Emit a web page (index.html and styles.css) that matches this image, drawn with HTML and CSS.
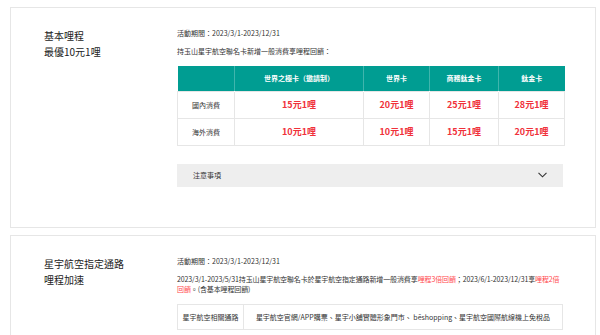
FILE: index.html
```html
<!DOCTYPE html>
<html lang="zh-Hant">
<head>
  <meta charset="UTF-8" />
  <meta name="viewport" content="width=device-width, initial-scale=1.0"/>
  <title>星宇聯名卡 - 哩程回饋</title>
  <link rel="stylesheet" href="styles.css">
</head>
<body>
  <div class="page">
    <section class="card card-basic">
      <h2 class="card-title">基本哩程<br>最優10元1哩</h2>
      <div class="card-body">
        <p class="period">活動期間：2023/3/1-2023/12/31</p>
        <p class="desc">持玉山星宇航空聯名卡新增一般消費享哩程回饋：</p>

        <table class="mile-table">
          <colgroup>
            <col class="c-label">
            <col class="c-infinite">
            <col class="c-world">
            <col class="c-business">
            <col class="c-titanium">
          </colgroup>
          <thead>
            <tr>
              <th></th>
              <th>世界之極卡（邀請制）</th>
              <th>世界卡</th>
              <th>商務鈦金卡</th>
              <th>鈦金卡</th>
            </tr>
          </thead>
          <tbody>
            <tr>
              <td class="row-label">國內消費</td>
              <td class="rate">15元1哩</td>
              <td class="rate">20元1哩</td>
              <td class="rate">25元1哩</td>
              <td class="rate">28元1哩</td>
            </tr>
            <tr>
              <td class="row-label">海外消費</td>
              <td class="rate">10元1哩</td>
              <td class="rate">10元1哩</td>
              <td class="rate">15元1哩</td>
              <td class="rate">20元1哩</td>
            </tr>
          </tbody>
        </table>

        <div class="notice">
          <span>注意事項</span>
          <svg class="chevron" width="9" height="6" viewBox="0 0 9 6">
            <polyline points="0.5,0.8 4.5,4.8 8.5,0.8" fill="none" stroke="#333" stroke-width="1.1"/>
          </svg>
        </div>
      </div>
    </section>

    <section class="card">
      <h2 class="card-title">星宇航空指定通路<br>哩程加速</h2>
      <div class="card-body">
        <p class="period">活動期間：2023/3/1-2023/12/31</p>
        <p class="desc desc-tight">2023/3/1-2023/5/31持玉山星宇航空聯名卡於星宇航空指定通路新增一般消費享<span class="hl">哩程3倍回饋</span>；2023/6/1-2023/12/31享<span class="hl">哩程2倍回饋</span>。(含基本哩程回饋)</p>

        <table class="channel-table">
          <colgroup>
            <col class="c-channel">
            <col>
          </colgroup>
          <tr>
            <td>星宇航空相關通路</td>
            <td>星宇航空官網/APP購票、星宇小舖實體形象門市、 bēshopping、星宇航空國際航線機上免稅品</td>
          </tr>
        </table>
      </div>
    </section>
  </div>
</body>
</html>
```

FILE: styles.css
```css
* {
  box-sizing: border-box;
}

body {
  margin: 0;
  background: #fff;
  color: #333;
  font-family: "Noto Sans CJK TC", "Noto Sans", sans-serif;
}

.page {
  padding: 7px 4px 0 10px;
  display: flex;
  flex-direction: column;
  gap: 7px;
}

.card {
  display: flex;
  border: 1px solid #e6e6e6;
  padding: 20px 32px 24px 33px;
  background: #fff;
}

.card-basic {
  padding-bottom: 40px;
}

.card-title {
  width: 133px;
  flex-shrink: 0;
  margin: 0;
  font-size: 10px;
  line-height: 16px;
  font-weight: normal;
  color: #222;
}

.card-body {
  flex: 1;
  min-width: 0;
  font-size: 7px;
  line-height: 10px;
}

.card-body p {
  margin: 0;
}

.desc {
  margin-top: 8px !important;
  margin-bottom: 10px !important;
}

.desc-tight {
  letter-spacing: -0.12px;
}

.hl {
  color: #ff4a4f;
}

/* mileage table */
.mile-table,
.channel-table {
  width: 100%;
  border-collapse: collapse;
  table-layout: fixed;
}

.c-label { width: 57px; }
.c-infinite { width: 129px; }
.c-world { width: 66px; }
.c-business { width: 69px; }
.c-titanium { width: 66px; }

.mile-table th {
  background: #009d92;
  color: #fff;
  font-weight: bold;
  font-size: 7px;
  height: 25px;
  padding: 0;
  border-left: 1px solid rgba(255, 255, 255, 0.25);
}

.mile-table th:first-child {
  border-left: none;
}

.mile-table td {
  height: 27px;
  padding: 0;
  text-align: center;
  border: 1px solid #e6e6e6;
}

.row-label {
  font-size: 7px;
  color: #333;
}

.rate {
  color: #f0313a;
  font-weight: bold;
  font-size: 9px;
}

.notice {
  margin-top: 18px;
  height: 23px;
  background: #eeeeee;
  display: flex;
  align-items: center;
  justify-content: space-between;
  padding: 0 16px 0 16px;
  font-size: 7px;
  color: #333;
}

.chevron {
  display: block;
}

/* channel table */
.c-channel { width: 66px; }

.channel-table td {
  height: 25px;
  padding: 0;
  text-align: center;
  border: 1px solid #e6e6e6;
  font-size: 7px;
}
```
